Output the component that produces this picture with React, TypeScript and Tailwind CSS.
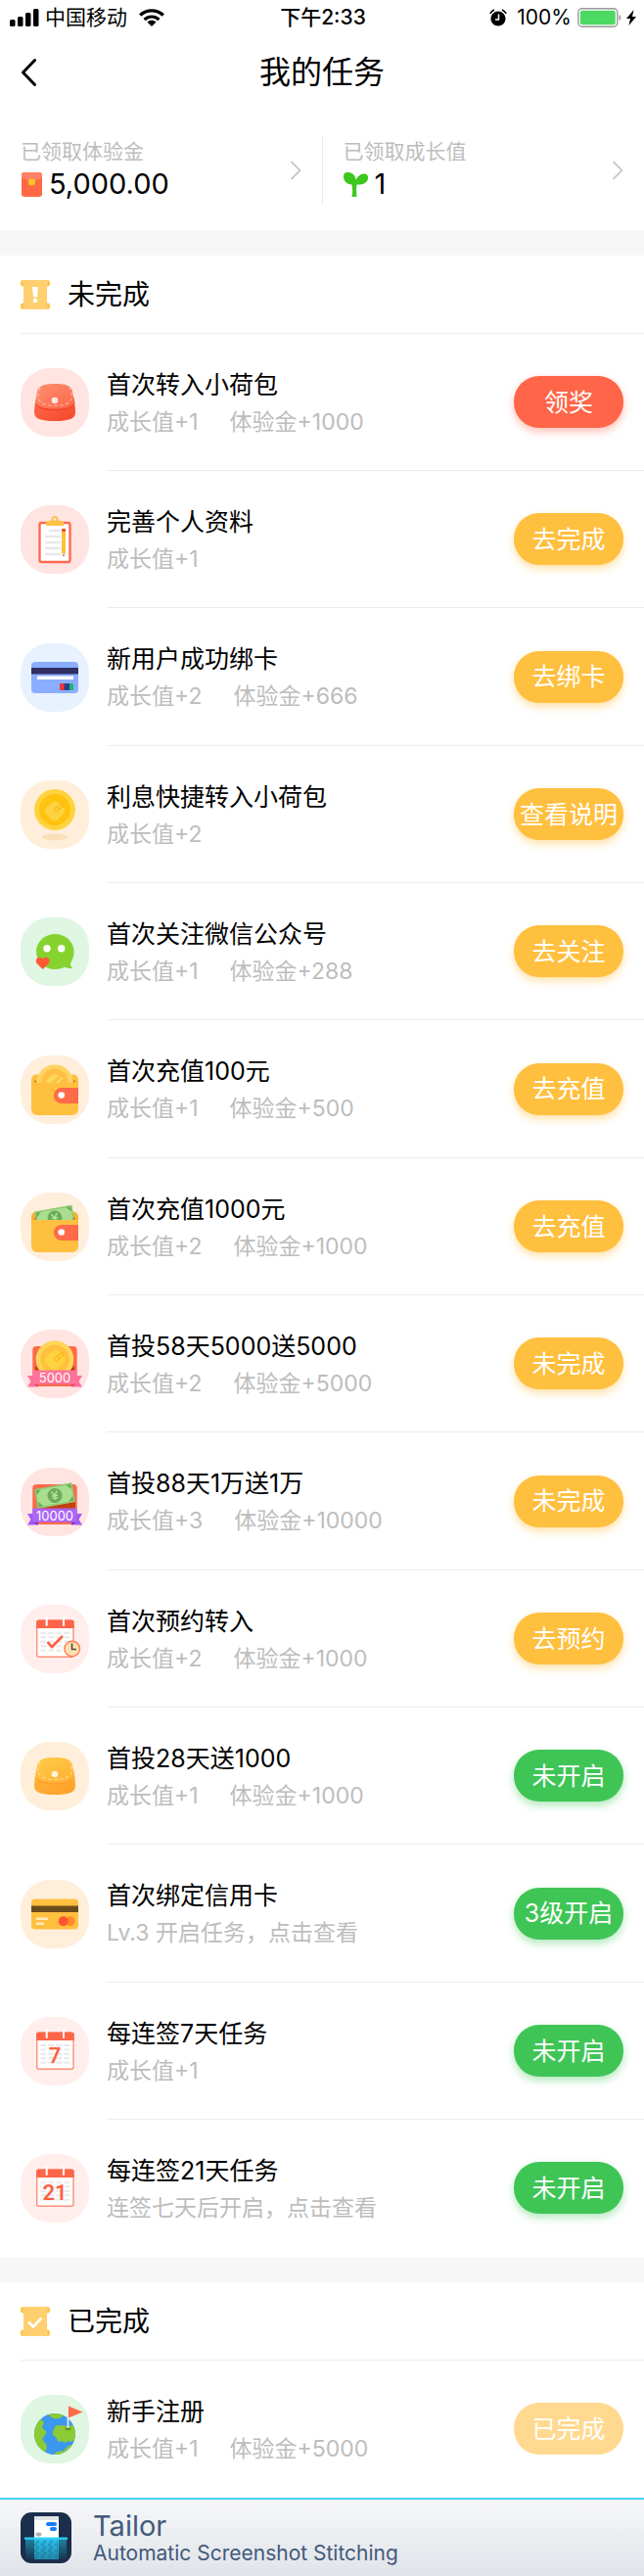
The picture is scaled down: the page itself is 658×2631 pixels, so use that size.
import type { ReactNode } from 'react';
import clsx from 'clsx';

type Tone = 'red' | 'orange' | 'green' | 'done';

interface Task {
  title: string;
  notes: string[];
  action: string;
  tone: Tone;
  bg: string;
  icon: ReactNode;
}

const toneClasses: Record<Tone, string> = {
  red: 'bg-[#ff6548] shadow-[0_4px_8px_rgba(255,101,72,0.4)]',
  orange: 'bg-[#ffbf3f] shadow-[0_4px_8px_rgba(255,191,63,0.45)]',
  green: 'bg-[#3fc556] shadow-[0_4px_8px_rgba(63,197,86,0.4)]',
  done: 'bg-[#ffd98f]',
};

/* ---------- task icons, all on a 70x70 grid ---------- */

function PurseIcon({ id, flap, body }: { id: string; flap: [string, string]; body: [string, string] }) {
  return (
    <svg viewBox="0 0 70 70" className="size-full" aria-hidden="true">
      <defs>
        <linearGradient id={`${id}-flap`} x1="0" y1="0" x2="1" y2="1">
          <stop offset="0" stopColor={flap[0]} />
          <stop offset="1" stopColor={flap[1]} />
        </linearGradient>
        <linearGradient id={`${id}-body`} x1="0" y1="0" x2="1" y2="1">
          <stop offset="0" stopColor={body[0]} />
          <stop offset="1" stopColor={body[1]} />
        </linearGradient>
      </defs>
      <path d="M16 31C14.500 36 14 41 14 45c0 6.500 6 9 21 9s21-2.500 21-9c0-4-.5-9-2-14z" fill={`url(#${id}-body)`} />
      <path d="M15 36c3 6 10 7.500 20 7.500S52 42 55.500 36l-1-6h-38z" fill={body[1]} />
      <path d="M17 24c1-5.500 6-8 18-8s17 2.500 18 8l2 11c-3 5-10 6.500-20 6.500S18 40 15 35z" fill={`url(#${id}-flap)`} />
      <path
        d="M20 20c-2 4-2.500 9-1.500 12 3 5 8 6.500 16.500 6.500S49 37 52 32c.5-4 0-9-2-12"
        fill="none"
        stroke="#fff"
        strokeOpacity=".45"
        strokeWidth="1.200"
        strokeDasharray="3.500 2.500"
      />
      <circle cx="35" cy="33" r="3.300" fill="#fff" fillOpacity=".8" />
    </svg>
  );
}

function ClipboardIcon() {
  return (
    <svg viewBox="0 0 70 70" className="size-full" aria-hidden="true">
      <rect x="19.500" y="18" width="31" height="40" rx="2" fill="#fff" stroke="#ff6b50" strokeWidth="2.400" />
      <circle cx="35" cy="14.500" r="2.600" fill="none" stroke="#ffc247" strokeWidth="2" />
      <path d="M30 15.500h10l4 1.500v4H26v-4z" fill="#ffc247" />
      <path d="M29 26h12M25 32h16M25 38h16M25 44h16M25 50h16" stroke="#e8e8e8" strokeWidth="2.600" />
      <rect x="42" y="24" width="4" height="3" fill="#f2503a" />
      <rect x="42" y="27" width="4" height="22" fill="#ffbf3f" />
      <path d="M42 49h4l-1.500 3h-1z" fill="#e9cf9f" />
      <path d="M43.300 50.800h1.500l-.8 1.800z" fill="#444" />
    </svg>
  );
}

function BlueCardIcon() {
  return (
    <svg viewBox="0 0 70 70" className="size-full" aria-hidden="true">
      <rect x="11" y="19" width="48" height="32" rx="4" fill="#8aadff" />
      <rect x="11" y="25" width="48" height="6.500" fill="#302f63" />
      <rect x="17" y="33.500" width="37" height="3.500" fill="#fff" />
      <rect x="40" y="41" width="5.500" height="7" rx="1" fill="#f0353a" />
      <rect x="49" y="41" width="5" height="7" rx="1" fill="#1fb573" />
      <rect x="44.500" y="41" width="5.500" height="7" rx="1" fill="#27418f" />
    </svg>
  );
}

function CoinMark() {
  return (
    <>
      <path d="M24.500 31c0-1.500 6-8 10.500-10 3.500 1 10.500 7 10.500 9.500S39 40.500 35 42c-4-1-10.500-8-10.500-11z" fill="#ffd23f" />
      <path
        d="M44 23l-9 5.500c-2 3 1.500 4 3 2.500l6-5.500M38 28l1 1"
        fill="none"
        stroke="#fbb915"
        strokeWidth="1.200"
        strokeLinecap="round"
      />
    </>
  );
}

function CoinIcon() {
  return (
    <svg viewBox="0 0 70 70" className="size-full" aria-hidden="true">
      <ellipse cx="35" cy="58" rx="13" ry="3.500" fill="#f8dfb8" />
      <circle cx="35" cy="30" r="21" fill="#ffd23f" />
      <circle cx="35" cy="30" r="16" fill="#ffc20e" />
      <CoinMark />
    </svg>
  );
}

function ChatIcon() {
  return (
    <svg viewBox="0 0 70 70" className="size-full" aria-hidden="true">
      <path
        d="M35.300 17C24.500 17 16 25 16 35s8.500 18 19.300 18c4 0 7.500-1 10-2.200 2.500 1.200 5.200 1.500 8.200 1-2-1.300-2.800-3-2.500-5.300 2.300-3 3.600-7 3.600-11.500C54.600 25 46 17 35.300 17z"
        fill="#86d32f"
      />
      <circle cx="27" cy="31.700" r="3.700" fill="#fff" />
      <circle cx="41.700" cy="31.700" r="3.700" fill="#fff" />
      <path d="M22.700 53l-5.700-5.500c-4-4.500 2.500-9.500 5.700-5 3.200-4.500 9.700.5 5.700 5z" fill="#ff5a34" />
    </svg>
  );
}

function WalletFront() {
  return (
    <>
      <path d="M11 24v31a6 6 0 0 0 6 6h36a6 6 0 0 0 6-6V28H11z" fill="#ffbf3f" />
      <path d="M59 33H42a8 8 0 0 0 0 16h17z" fill="#ff6a48" />
      <circle cx="41.700" cy="40.500" r="3.300" fill="#fff" />
      <circle cx="15.200" cy="26.500" r="1" fill="#c96a1c" />
      <circle cx="54.800" cy="26.500" r="1" fill="#c96a1c" />
    </>
  );
}

function WalletCoinIcon() {
  return (
    <svg viewBox="0 0 70 70" className="size-full" aria-hidden="true">
      <path d="M11 29v-4c0-3 2-5.500 5-5.500h38c3 0 5 2.500 5 5.500v4z" fill="#ffbf3f" />
      <path d="M16.500 28c0-11 8-18.500 18.500-18.500S53.500 17 53.500 28z" fill="#ffd465" />
      <path d="M21 28c0-8 6-14.500 14-14.500S49 20 49 28z" fill="#ffc043" />
      <path d="M26 28c1-4 5-8 9-9l4 1.500L31 28zM35 28l7-6 1.500 1.500L39 28z" fill="#ffd95c" />
      <WalletFront />
    </svg>
  );
}

function Banknote() {
  return (
    <>
      <rect x="-19.500" y="-10" width="39" height="20" rx=".5" fill="#8ccb72" />
      <rect x="-18" y="-8.500" width="36" height="17" fill="#a9de8e" />
      <path d="M-18-8.500h5l-5 5zM18-8.500v5l-5-5zM-18 8.500v-5l5 5zM18 8.500h-5l5-5z" fill="#6cab5c" />
      <circle r="7.500" fill="#6cab5c" />
      <path d="M-3-4.500L0-.5l3-4M0-.5v5M-3 0h6M-3 2.500h6" fill="none" stroke="#b4e69b" strokeWidth="1.400" />
    </>
  );
}

function WalletCashIcon() {
  return (
    <svg viewBox="0 0 70 70" className="size-full" aria-hidden="true">
      <path d="M11 29v-4c0-3 2-5.500 5-5.500h38c3 0 5 2.500 5 5.500v4z" fill="#f9b131" />
      <g transform="translate(35 26) rotate(-10)">
        <Banknote />
      </g>
      <WalletFront />
    </svg>
  );
}

function Ribbon({ color, dark, label, shade }: { color: string; dark: string; label: string; shade: string }) {
  return (
    <>
      <path d="M7 47h11v11.500H7l3.500-5.500zM63 47H52v11.500h11L59.500 53z" fill={color} />
      <path d="M12.300 55.500H18v3zM57.700 55.500H52v3z" fill={dark} />
      <rect x="12.300" y="41.500" width="45.400" height="14.200" fill={shade} />
      <text x="35" y="53.500" textAnchor="middle" fontSize="13" fill="#fff" fontFamily="Inter, sans-serif">
        {label}
      </text>
    </>
  );
}

function CoinPrizeIcon() {
  return (
    <svg viewBox="0 0 70 70" className="size-full" aria-hidden="true">
      <rect x="12.300" y="17" width="45.400" height="41" rx="4" fill="#ff6a48" />
      <path d="M15 37l6 5h28l6-5v6H15z" fill="#b8420f" />
      <circle cx="35" cy="30.500" r="19.300" fill="#ffd55a" />
      <circle cx="35" cy="30.500" r="14.800" fill="#ffc13b" />
      <CoinMark />
      <Ribbon color="#ff6e9b" dark="#e0427a" shade="#ff7399" label="5000" />
    </svg>
  );
}

function CashPrizeIcon() {
  return (
    <svg viewBox="0 0 70 70" className="size-full" aria-hidden="true">
      <rect x="12.300" y="17" width="45.400" height="41" rx="4" fill="#ff6a48" />
      <path d="M18 42l38-7v7z" fill="#c2410c" />
      <g transform="translate(35 28.500) rotate(-10)">
        <Banknote />
      </g>
      <Ribbon color="#a557f2" dark="#7a2fd0" shade="#ad66f5" label="10000" />
    </svg>
  );
}

function CalendarIcon({ day }: { day?: string }) {
  return (
    <svg viewBox="0 0 70 70" className="size-full" aria-hidden="true">
      <rect x="16.700" y="16.200" width="37.300" height="37" rx="2" fill="#fff" stroke="#ff8f79" strokeWidth="1.400" />
      <path d="M16 24v-6a2.500 2.500 0 0 1 2.500-2.500h33.700a2.500 2.500 0 0 1 2.500 2.500v6z" fill="#ff6548" />
      <path
        d="M20.300 29h31M20.300 33.400h31M20.300 37.800h31M20.300 42.200h31M20.300 46.600h31"
        stroke="#ebebeb"
        strokeWidth="2.400"
        strokeDasharray="6 2"
      />
      <path d="M26.700 13v8M44 13v8" stroke="#fff" strokeWidth="2" strokeLinecap="round" />
      {day ? (
        <text x="35" y="47" textAnchor="middle" fontSize="22" fontWeight="600" fill="#ff5f42" fontFamily="Roboto, sans-serif">
          {day}
        </text>
      ) : (
        <>
          <path d="M27.500 38l4.500 5L43 32" fill="none" stroke="#ff5f42" strokeWidth="2.600" />
          <circle cx="52.700" cy="45" r="7.800" fill="#ffe2b0" stroke="#ff7a55" strokeWidth="1.400" />
          <path d="M52.500 39.500V45.500h4.500" fill="none" stroke="#4a4a4a" strokeWidth="1.600" />
        </>
      )}
    </svg>
  );
}

function OrangeCardIcon() {
  return (
    <svg viewBox="0 0 70 70" className="size-full" aria-hidden="true">
      <rect x="11" y="19.500" width="48" height="31" rx="4" fill="#ffbf3f" />
      <rect x="11" y="26.500" width="48" height="6.500" fill="#6a4c1b" />
      <path d="M16 39.800h12M16 44.800h8" stroke="#ffe9bd" strokeWidth="2.600" />
      <circle cx="50.500" cy="42.300" r="5" fill="#ff8a2b" />
      <circle cx="43.700" cy="42.300" r="5" fill="#ff552e" />
    </svg>
  );
}

function GlobeIcon() {
  return (
    <svg viewBox="0 0 70 70" className="size-full" aria-hidden="true">
      <defs>
        <clipPath id="globe">
          <circle cx="35" cy="40" r="21" />
        </clipPath>
      </defs>
      <g clipPath="url(#globe)">
        <rect x="14" y="19" width="42" height="42" fill="#3c97ee" />
        <path d="M12 30c4-4 6-6 9-5l3 3-2 5 2 3c3 0 3 3 1 5l-3 4 3 4c3 3 2 6 0 9l1 6H12z" fill="#8bcb35" />
        <path d="M27 17h15l3 4c-2 2-4 1-5 3-3 0-4 1-6 0-3-1-6-3-7-7z" fill="#8bcb35" />
        <path d="M36 32c2-2 5 0 7-1l4 1 9-1v14l-4 3-3-1-4 2-3-2c-3 2-5 0-5-3l-4-3c-1-3 1-6 3-9z" fill="#8bcb35" />
        <path d="M33 62l4-4 7-1 6-6 6 1v10z" fill="#8bcb35" />
      </g>
      <ellipse cx="48.500" cy="34.500" rx="3" ry="1.500" fill="#5d8f1e" />
      <path d="M48.500 12v22" stroke="#e9e9ef" strokeWidth="1.800" />
      <path d="M49 11.500L63.500 17.500 49 23.500z" fill="#ff6a48" />
    </svg>
  );
}

/* ---------- small glyphs ---------- */

function ScrollIcon({ done }: { done?: boolean }) {
  return (
    <svg viewBox="0 0 30 30" className="size-[30px]" aria-hidden="true">
      <rect x="0" y="0" width="5" height="6.500" rx="2.500" fill="#ffc24a" />
      <rect x="25" y="0" width="5" height="6.500" rx="2.500" fill="#ffc24a" />
      <rect x="0" y="23.500" width="5" height="6.500" rx="2.500" fill="#ffc24a" />
      <rect x="25" y="23.500" width="5" height="6.500" rx="2.500" fill="#ffc24a" />
      <path d="M2 0h26l-1 6v18l1 6H2l1-6V6z" fill="#ffcf70" />
      {done ? (
        <path d="M8 15.500l5 5 8.500-9" fill="none" stroke="#fff" strokeWidth="2.600" />
      ) : (
        <>
          <path d="M12 7h6l-1 10.500h-4z" fill="#fff" />
          <circle cx="15" cy="21" r="2.300" fill="#fff" />
        </>
      )}
    </svg>
  );
}

function EnvelopeIcon() {
  return (
    <svg viewBox="0 0 21 25" className="ml-px h-[25px] w-[21px]" aria-hidden="true">
      <rect width="21" height="25" rx="3" fill="#ff6a45" />
      <path d="M0 5V3a3 3 0 0 1 3-3h15a3 3 0 0 1 3 3v2c-6 5-15 5-21 0z" fill="#ff8266" />
      <circle cx="10.500" cy="10" r="3.500" fill="#ffc529" />
    </svg>
  );
}

function SproutIcon() {
  return (
    <svg viewBox="0 0 25 25" className="size-[25px]" aria-hidden="true">
      <path
        d="M8.500 25c1-4 .8-8 0-12.500C4 12.500 0 9 0 4.500 0 0 3 0 5 0c5 .5 7.500 4 7.500 8C14 4 18 1 22 1.500c2.500.5 3.500 3 3 5-1 4.500-5.500 6.500-11.500 6-.5 4-.5 8 0 12.500z"
        fill="#3cc71c"
      />
    </svg>
  );
}

function Chevron() {
  return (
    <svg viewBox="0 0 12 20" className="h-5 w-3 text-[#c8c8c8]" aria-hidden="true">
      <path d="M1.500 1l9 9-9 9" fill="none" stroke="currentColor" strokeWidth="1.800" />
    </svg>
  );
}

function TailorLogo() {
  return (
    <svg viewBox="0 0 52 52" className="size-[52px]" aria-hidden="true">
      <defs>
        <linearGradient id="pool" x1="0" y1="0" x2="0" y2="1">
          <stop offset="0" stopColor="#1d83a0" />
          <stop offset="1" stopColor="#1b3350" />
        </linearGradient>
        <linearGradient id="sheet" x1="0" y1="0" x2="0" y2="1">
          <stop offset="0" stopColor="#2cc4ee" />
          <stop offset="1" stopColor="#2289ab" />
        </linearGradient>
      </defs>
      <rect width="52" height="52" rx="11" fill="#1b2e4b" />
      <rect x="5" y="27" width="42" height="21" fill="url(#pool)" />
      <rect x="14" y="4" width="25" height="23" rx="1" fill="#fff" />
      <path d="M14 8V5.500A1.500 1.500 0 0 1 15.500 4h22A1.500 1.500 0 0 1 39 5.500V8z" fill="#e4e4e8" />
      <rect x="26" y="10" width="11" height="4" rx="2" fill="#147efb" />
      <rect x="30" y="15" width="7" height="4" rx="2" fill="#147efb" />
      <rect x="15.500" y="20.500" width="6" height="4" rx="2" fill="#b0b0b4" />
      <rect x="14" y="27" width="25" height="21" fill="url(#sheet)" />
      <path
        d="M16 30h22M14 33h24M16 36h22M14 39h24M16 42h22M14 45h24"
        stroke="#176f92"
        strokeOpacity=".4"
        strokeWidth="3"
        strokeDasharray="3 4"
      />
      <rect x="4" y="25.500" width="44" height="2.200" fill="#2fd0f8" />
    </svg>
  );
}

/* ---------- data ---------- */

const pending: Task[] = [
  {
    title: '首次转入小荷包',
    notes: ['成长值+1', '体验金+1000'],
    action: '领奖',
    tone: 'red',
    bg: 'bg-[#ffe4e1]',
    icon: <PurseIcon id="purse-red" flap={['#ff8f70', '#fb6749']} body={['#ff6a48', '#f5472d']} />,
  },
  { title: '完善个人资料', notes: ['成长值+1'], action: '去完成', tone: 'orange', bg: 'bg-[#ffe4e1]', icon: <ClipboardIcon /> },
  { title: '新用户成功绑卡', notes: ['成长值+2', '体验金+666'], action: '去绑卡', tone: 'orange', bg: 'bg-[#e8f2fe]', icon: <BlueCardIcon /> },
  { title: '利息快捷转入小荷包', notes: ['成长值+2'], action: '查看说明', tone: 'orange', bg: 'bg-[#ffefda]', icon: <CoinIcon /> },
  { title: '首次关注微信公众号', notes: ['成长值+1', '体验金+288'], action: '去关注', tone: 'orange', bg: 'bg-[#dff6e2]', icon: <ChatIcon /> },
  { title: '首次充值100元', notes: ['成长值+1', '体验金+500'], action: '去充值', tone: 'orange', bg: 'bg-[#ffeedb]', icon: <WalletCoinIcon /> },
  { title: '首次充值1000元', notes: ['成长值+2', '体验金+1000'], action: '去充值', tone: 'orange', bg: 'bg-[#ffeedb]', icon: <WalletCashIcon /> },
  { title: '首投58天5000送5000', notes: ['成长值+2', '体验金+5000'], action: '未完成', tone: 'orange', bg: 'bg-[#ffe4e1]', icon: <CoinPrizeIcon /> },
  { title: '首投88天1万送1万', notes: ['成长值+3', '体验金+10000'], action: '未完成', tone: 'orange', bg: 'bg-[#ffe4e1]', icon: <CashPrizeIcon /> },
  { title: '首次预约转入', notes: ['成长值+2', '体验金+1000'], action: '去预约', tone: 'orange', bg: 'bg-[#ffeeec]', icon: <CalendarIcon /> },
  {
    title: '首投28天送1000',
    notes: ['成长值+1', '体验金+1000'],
    action: '未开启',
    tone: 'green',
    bg: 'bg-[#ffefda]',
    icon: <PurseIcon id="purse-gold" flap={['#ffcb4a', '#ffb031']} body={['#ffb43a', '#ff9f2b']} />,
  },
  { title: '首次绑定信用卡', notes: ['Lv.3 开启任务，点击查看'], action: '3级开启', tone: 'green', bg: 'bg-[#ffefda]', icon: <OrangeCardIcon /> },
  { title: '每连签7天任务', notes: ['成长值+1'], action: '未开启', tone: 'green', bg: 'bg-[#ffeeec]', icon: <CalendarIcon day="7" /> },
  { title: '每连签21天任务', notes: ['连签七天后开启，点击查看'], action: '未开启', tone: 'green', bg: 'bg-[#ffeeec]', icon: <CalendarIcon day="21" /> },
];

const finished: Task[] = [
  { title: '新手注册', notes: ['成长值+1', '体验金+5000'], action: '已完成', tone: 'done', bg: 'bg-[#dff6e2]', icon: <GlobeIcon /> },
];

/* ---------- page parts ---------- */

function StatusBar() {
  return (
    <div className="grid h-9 grid-cols-[1fr_auto_1fr] items-center pr-2 pl-[10px] text-[21px]">
      <div className="flex items-center gap-[6px]">
        <svg viewBox="0 0 30 18" className="h-[18px] w-[30px]" aria-hidden="true">
          <rect x="0" y="11" width="5.500" height="7" rx="1.500" />
          <rect x="8" y="8" width="5.500" height="10" rx="1.500" />
          <rect x="16" y="4" width="5.500" height="14" rx="1.500" />
          <rect x="24" y="0" width="5.500" height="18" rx="1.500" />
        </svg>
        <span>中国移动</span>
        <svg viewBox="0 0 26 18" className="ml-[6px] h-[18px] w-[26px]" aria-hidden="true">
          <g fill="none" stroke="#000" strokeWidth="3.200">
            <path d="M1.200 6.500c6.800-6.200 16.800-6.200 23.600 0" />
            <path d="M5.500 11c4.400-4 10.600-4 15 0" />
          </g>
          <path d="M13 18l-4.500-4.600c2.600-2.200 6.400-2.200 9 0z" />
        </svg>
      </div>
      <span className="font-medium">下午2:33</span>
      <div className="flex items-center justify-end">
        <svg viewBox="0 0 18 18" className="mr-[10px] size-[18px]" aria-hidden="true">
          <circle cx="9" cy="10" r="7.600" />
          <path d="M.8 5A9 9 0 0 1 5 1M17.200 5A9 9 0 0 0 13 1" fill="none" stroke="#000" strokeWidth="1.600" />
          <path d="M9.500 5.500V11H6" fill="none" stroke="#fff" strokeWidth="1.500" />
        </svg>
        <span>100%</span>
        <svg viewBox="0 0 46 20" className="ml-[6px] h-5 w-[46px]" aria-hidden="true">
          <rect x=".8" y=".8" width="40" height="18.400" rx="4" fill="#fff" stroke="#9a9a9a" strokeWidth="1.400" />
          <rect x="2.800" y="2.800" width="36" height="14.400" rx="2" fill="#4cd964" />
          <path d="M42.500 7v6c2.500-1 2.500-5 0-6z" fill="#9a9a9a" />
        </svg>
        <svg viewBox="0 0 10 16" className="ml-1 h-4 w-[10px]" aria-hidden="true">
          <path d="M7.500 0L0 9h4L2.500 16 10 7H6z" />
        </svg>
      </div>
    </div>
  );
}

function Summary({ label, value, icon }: { label: string; value: string; icon: ReactNode }) {
  return (
    <a href="#" className="flex flex-1 items-center justify-between px-[21px]">
      <span className="flex flex-col pb-[3px]">
        <span className="text-[21px] leading-8 text-[#bdbdbd]">{label}</span>
        <span className="flex items-center gap-[7px] text-[29px] leading-[34px]">
          {icon}
          {value}
        </span>
      </span>
      <Chevron />
    </a>
  );
}

function TaskRow({ task }: { task: Task }) {
  return (
    <li className="group flex h-[140px] pl-[21px] nth-[3n]:h-[141px]">
      <div className={clsx('mr-[18px] size-[70px] shrink-0 self-center overflow-hidden rounded-[30px]', task.bg)}>{task.icon}</div>
      <div className="flex min-w-0 flex-1 items-center justify-between border-b border-[#ededed] pr-[21px] group-last:border-transparent">
        <div className="pt-0.5">
          <h3 className="text-[25px] leading-[38px]">{task.title}</h3>
          <p className="flex gap-8 text-[23px] leading-[38px] text-[#bdbdbd]">
            {task.notes.map((note) => (
              <span key={note}>{note}</span>
            ))}
          </p>
        </div>
        <button
          type="button"
          disabled={task.tone === 'done'}
          className={clsx('h-[53px] w-[112px] shrink-0 rounded-[26px] pt-0.5 text-[25px] whitespace-nowrap text-white', toneClasses[task.tone])}
        >
          {task.action}
        </button>
      </div>
    </li>
  );
}

function TaskSection({ title, done, tasks }: { title: string; done?: boolean; tasks: Task[] }) {
  return (
    <section className="border-t-[26px] border-[#f7f7f7]">
      <div className="ml-[21px] flex h-20 items-center gap-[18px] border-b border-[#ededed]">
        <ScrollIcon done={done} />
        <h2 className="text-[28px]">{title}</h2>
      </div>
      <ul>
        {tasks.map((task) => (
          <TaskRow key={task.title} task={task} />
        ))}
      </ul>
    </section>
  );
}

export default function App() {
  return (
    <div className="w-full bg-white font-[Inter,'Noto_Sans_CJK_SC',sans-serif] text-black">
      <header>
        <StatusBar />
        <div className="grid h-[76px] grid-cols-[1fr_auto_1fr] items-center px-[21px]">
          <button type="button" aria-label="返回" className="w-4">
            <svg viewBox="0 0 16 28" className="h-7 w-4" aria-hidden="true">
              <path d="M14.500 1.500L2.500 14l12 12.500" fill="none" stroke="#000" strokeWidth="3" strokeLinecap="round" strokeLinejoin="round" />
            </svg>
          </button>
          <h1 className="text-[32px]">我的任务</h1>
        </div>
      </header>

      <div className="flex h-[123px] items-center">
        <Summary label="已领取体验金" value="5,000.00" icon={<EnvelopeIcon />} />
        <div className="h-[70px] w-px bg-[#ebebeb]" />
        <Summary label="已领取成长值" value="1" icon={<SproutIcon />} />
      </div>

      <main>
        <TaskSection title="未完成" tasks={pending} />
        <TaskSection title="已完成" done tasks={finished} />
      </main>

      <footer className="flex h-20 items-center gap-[22px] border-t-2 border-[#4fd0f8] bg-linear-to-b from-[#f6f7f9] to-[#e0e4e9] px-[21px] text-[#44597b]">
        <TailorLogo />
        <div>
          <p className="text-[29px] leading-8">Tailor</p>
          <p className="text-[21px] leading-6">Automatic Screenshot Stitching</p>
        </div>
      </footer>
    </div>
  );
}
